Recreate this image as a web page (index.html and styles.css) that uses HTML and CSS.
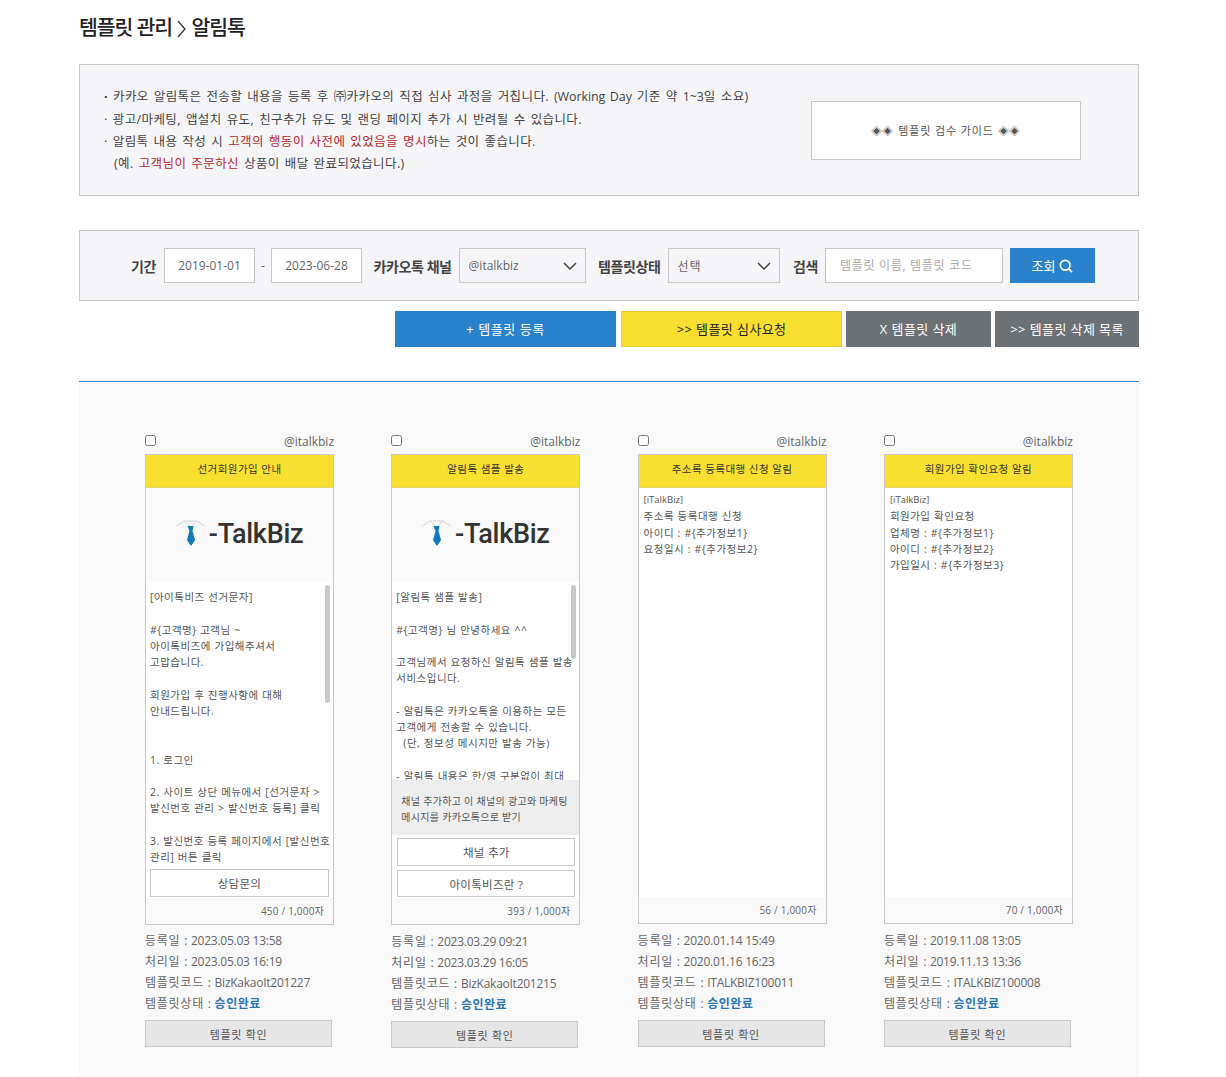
FILE: index.html
```html
<!DOCTYPE html>
<html lang="ko">
<head>
    <meta charset="UTF-8">
    <meta name="viewport" content="width=device-width, initial-scale=1.0">
    <title>템플릿 관리 - 알림톡</title>
    <link rel="stylesheet" href="styles.css">
</head>
<body>
    <main class="page">
        <h1 class="page-title">템플릿 관리 <svg class="crumb-sep" viewBox="0 0 9 18"><path d="M1 1l7 8-7 8"/></svg> 알림톡</h1>

        <section class="notice">
            <div class="notice-text">
                <p><b class="dot">·</b> 카카오 알림톡은 전송할 내용을 등록 후 ㈜카카오의 직접 심사 과정을 거칩니다. <span class="latin">(Working Day</span> 기준 약 <span class="latin">1~3</span>일 소요)</p>
                <p>· 광고/마케팅, 앱설치 유도, 친구추가 유도 및 랜딩 페이지 추가 시 반려될 수 있습니다.</p>
                <p>· 알림톡 내용 작성 시 <span class="red">고객의 행동이 사전에 있었음을 명시</span>하는 것이 좋습니다.</p>
                <p class="indent">(예. <span class="red">고객님이 주문하신</span> 상품이 배달 완료되었습니다.)</p>
            </div>
            <a class="guide-link">◈◈ 템플릿 검수 가이드 ◈◈</a>
        </section>

        <form class="search-bar">
            <label class="search-label label-first">기간</label>
            <input class="field date-field" type="text" value="2019-01-01">
            <span class="dash">-</span>
            <input class="field date-field" type="text" value="2023-06-28">
            <label class="search-label label-channel">카카오톡 채널</label>
            <div class="field select-field channel-select">
                <span>@italkbiz</span>
                <svg class="chevron" viewBox="0 0 14 8"><path d="M1 1l6 6 6-6"/></svg>
            </div>
            <label class="search-label">템플릿상태</label>
            <div class="field select-field status-select">
                <span class="status-value">선택</span>
                <svg class="chevron" viewBox="0 0 14 8"><path d="M1 1l6 6 6-6"/></svg>
            </div>
            <label class="search-label label-keyword">검색</label>
            <input class="field keyword-field" type="text" placeholder="템플릿 이름, 템플릿 코드">
            <button class="search-btn" type="button">조회
                <svg class="search-icon" viewBox="0 0 14 14"><circle cx="6.2" cy="6.2" r="4.8"/><path d="M9.8 9.8l3.2 3.2"/></svg>
            </button>
        </form>

        <div class="actions">
            <button class="action-btn btn-blue" type="button">+ 템플릿 등록</button>
            <button class="action-btn btn-yellow" type="button">&gt;&gt; 템플릿 심사요청</button>
            <button class="action-btn btn-gray btn-delete" type="button">X 템플릿 삭제</button>
            <button class="action-btn btn-gray btn-deleted" type="button">&gt;&gt; 템플릿 삭제 목록</button>
        </div>

        <section class="template-panel">
            <article class="template">
                <div class="template-top">
                    <input type="checkbox">
                    <span class="channel-name">@italkbiz</span>
                </div>
                <div class="phone">
                    <div class="phone-title">선거회원가입 안내</div>
                    <div class="logo-box">
                        <svg class="tie" viewBox="0 0 29 27"><path class="collar" d="M.5 6L8 1h13l7.500 5M8 1l6.500 6L21 1"/><path class="tie-fill" d="M11.500 6h6l-1 5 2.500 9-4 6-4-6 2.500-9z"/></svg>
                        <span class="logo-text">-TalkBiz</span>
                    </div>
                    <div class="message message-one">
                        <span class="scroll-thumb thumb-one"></span>
                        <pre class="message-text">[아이톡비즈 선거문자]

#{고객명} 고객님 ~
아이톡비즈에 가입해주셔서
고맙습니다.

회원가입 후 진행사항에 대해
안내드립니다.


1. 로그인

2. 사이트 상단 메뉴에서 [선거문자 &gt;
발신번호 관리 &gt; 발신번호 등록] 클릭

3. 발신번호 등록 페이지에서 [발신번호
관리] 버튼 클릭</pre>
                    </div>
                    <div class="phone-btns">
                        <div class="phone-btn">상담문의</div>
                    </div>
                    <div class="count">450 / 1,000자</div>
                </div>
                <div class="meta">
                    <p><span class="meta-label">등록일 :</span> 2023.05.03 13:58</p>
                    <p><span class="meta-label">처리일 :</span> 2023.05.03 16:19</p>
                    <p><span class="meta-label">템플릿코드 :</span> BizKakaoIt201227</p>
                    <p><span class="meta-label">템플릿상태 :</span> <b class="status">승인완료</b></p>
                </div>
                <button class="check-btn" type="button">템플릿 확인</button>
            </article>

            <article class="template">
                <div class="template-top">
                    <input type="checkbox">
                    <span class="channel-name">@italkbiz</span>
                </div>
                <div class="phone">
                    <div class="phone-title">알림톡 샘플 발송</div>
                    <div class="logo-box">
                        <svg class="tie" viewBox="0 0 29 27"><path class="collar" d="M.5 6L8 1h13l7.500 5M8 1l6.500 6L21 1"/><path class="tie-fill" d="M11.500 6h6l-1 5 2.500 9-4 6-4-6 2.500-9z"/></svg>
                        <span class="logo-text">-TalkBiz</span>
                    </div>
                    <div class="message message-two">
                        <span class="scroll-thumb thumb-two"></span>
                        <pre class="message-text">[알림톡 샘플 발송]

#{고객명} 님 안녕하세요 ^^

고객님께서 요청하신 알림톡 샘플 발송
서비스입니다.

- 알림톡은 카카오톡을 이용하는 모든
고객에게 전송할 수 있습니다.
  (단, 정보성 메시지만 발송 가능)

- 알림톡 내용은 한/영 구분없이 최대</pre>
                    </div>
                    <div class="channel-add">채널 추가하고 이 채널의 광고와 마케팅<br>메시지를 카카오톡으로 받기</div>
                    <div class="phone-btns">
                        <div class="phone-btn">채널 추가</div>
                        <div class="phone-btn">아이톡비즈란 ?</div>
                    </div>
                    <div class="count">393 / 1,000자</div>
                </div>
                <div class="meta meta-low">
                    <p><span class="meta-label">등록일 :</span> 2023.03.29 09:21</p>
                    <p><span class="meta-label">처리일 :</span> 2023.03.29 16:05</p>
                    <p><span class="meta-label">템플릿코드 :</span> BizKakaoIt201215</p>
                    <p><span class="meta-label">템플릿상태 :</span> <b class="status">승인완료</b></p>
                </div>
                <button class="check-btn" type="button">템플릿 확인</button>
            </article>

            <article class="template">
                <div class="template-top">
                    <input type="checkbox">
                    <span class="channel-name">@italkbiz</span>
                </div>
                <div class="phone">
                    <div class="phone-title">주소록 등록대행 신청 알림</div>
                    <div class="message message-plain">
                        <pre class="message-text"><span class="brand-line">[iTalkBiz]</span>
주소록 등록대행 신청
아이디 : #{추가정보1}
요청일시 : #{추가정보2}</pre>
                    </div>
                    <div class="count">56 / 1,000자</div>
                </div>
                <div class="meta meta-low">
                    <p><span class="meta-label">등록일 :</span> 2020.01.14 15:49</p>
                    <p><span class="meta-label">처리일 :</span> 2020.01.16 16:23</p>
                    <p><span class="meta-label">템플릿코드 :</span> ITALKBIZ100011</p>
                    <p><span class="meta-label">템플릿상태 :</span> <b class="status">승인완료</b></p>
                </div>
                <button class="check-btn" type="button">템플릿 확인</button>
            </article>

            <article class="template">
                <div class="template-top">
                    <input type="checkbox">
                    <span class="channel-name">@italkbiz</span>
                </div>
                <div class="phone">
                    <div class="phone-title">회원가입 확인요청 알림</div>
                    <div class="message message-plain">
                        <pre class="message-text"><span class="brand-line">[iTalkBiz]</span>
회원가입 확인요청
업체명 : #{추가정보1}
아이디 : #{추가정보2}
가입일시 : #{추가정보3}</pre>
                    </div>
                    <div class="count">70 / 1,000자</div>
                </div>
                <div class="meta meta-low">
                    <p><span class="meta-label">등록일 :</span> 2019.11.08 13:05</p>
                    <p><span class="meta-label">처리일 :</span> 2019.11.13 13:36</p>
                    <p><span class="meta-label">템플릿코드 :</span> ITALKBIZ100008</p>
                    <p><span class="meta-label">템플릿상태 :</span> <b class="status">승인완료</b></p>
                </div>
                <button class="check-btn" type="button">템플릿 확인</button>
            </article>
        </section>
    </main>
</body>
</html>
```

FILE: styles.css
```css
* {
    margin: 0;
    padding: 0;
    box-sizing: border-box;
}

body {
    font-family: "Open Sans", "Noto Sans CJK KR", sans-serif;
    background: #fff;
    color: #555;
    height: 1077px;
    overflow: hidden;
}

.page {
    width: 1060px;
    margin-left: 79px;
}

.page-title {
    font-size: 20.500px;
    font-weight: 500;
    line-height: 28px;
    height: 64px;
    padding-top: 13px;
    color: #222;
    letter-spacing: -1.1px;
    white-space: nowrap;
}

.crumb-sep {
    width: 9px;
    height: 18px;
    margin: 0 1px;
    vertical-align: -3px;
    fill: none;
    stroke: #333;
    stroke-width: 1.3;
}

/* notice box */
.notice {
    display: flex;
    align-items: center;
    height: 132px;
    padding-left: 24px;
    background: #f5f5f7;
    border: 1px solid #c8c8c8;
}

.notice-text {
    width: 707px;
    padding-top: 2px;
    font-size: 12.500px;
    line-height: 22.300px;
    letter-spacing: 0.4px;
    word-spacing: 1.400px;
    color: #444;
    white-space: nowrap;
}

.latin {
    letter-spacing: -0.1px;
}

.dot {
    color: #222;
}

.indent {
    padding-left: 10px;
}

.red {
    color: #b8282e;
}

.guide-link {
    display: block;
    width: 270px;
    height: 59px;
    line-height: 57px;
    text-align: center;
    font-size: 11px;
    letter-spacing: 0.9px;
    color: #555;
    background: #fff;
    border: 1px solid #c8c8c8;
}

/* search */
.search-bar {
    display: flex;
    align-items: center;
    height: 71px;
    margin-top: 34px;
    padding-left: 51px;
    background: #f5f5f7;
    border: 1px solid #c8c8c8;
    white-space: nowrap;
}

.search-label {
    font-size: 14px;
    font-weight: 700;
    color: #444;
    letter-spacing: -0.4px;
    margin-left: 12.500px;
    margin-right: 7px;
}

.label-first {
    margin-left: 0;
    margin-right: 8px;
}

.label-channel {
    margin-left: 11.500px;
}

.label-keyword {
    margin-left: 13.500px;
}

.field {
    height: 35px;
    font-family: inherit;
    font-size: 12px;
    color: #666;
    background: #fff;
    border: 1px solid #c8c8c8;
}

.date-field {
    width: 91px;
    text-align: center;
}

.dash {
    width: 16px;
    text-align: center;
    font-size: 12px;
}

.select-field {
    display: flex;
    align-items: center;
    justify-content: space-between;
    padding: 0 8px 0 9px;
    background: #f5f5f7;
}

.channel-select {
    width: 127px;
}

.status-select {
    width: 112px;
}

.status-value {
    letter-spacing: 1px;
}

.chevron {
    width: 14px;
    height: 8px;
    fill: none;
    stroke: #444;
    stroke-width: 1.5;
}

.keyword-field {
    width: 178px;
    padding-left: 14px;
    letter-spacing: 0.7px;
}

.keyword-field::placeholder {
    color: #aaa;
}

.search-btn {
    display: flex;
    align-items: center;
    justify-content: center;
    gap: 4px;
    width: 85px;
    height: 35px;
    margin-left: 7px;
    font-family: inherit;
    font-size: 13px;
    color: #fff;
    background: #2a82cc;
    border: 0;
}

.search-icon {
    width: 14px;
    height: 14px;
    fill: none;
    stroke: #fff;
    stroke-width: 1.8;
}

/* action buttons */
.actions {
    display: flex;
    justify-content: flex-end;
    gap: 4px;
    margin-top: 10px;
}

.action-btn {
    height: 36px;
    padding-bottom: 1px;
    font-family: inherit;
    font-size: 13px;
    letter-spacing: 0.4px;
    border: 0;
    color: #fff;
}

.btn-blue {
    width: 221px;
    margin-right: 1px;
    background: #2a82cc;
    letter-spacing: 0.55px;
}

.btn-yellow {
    width: 221px;
    color: #222;
    background: #f9df2f;
    border: 1px solid #e5c92f;
}

.btn-gray {
    background: #6c7176;
}

.btn-delete {
    width: 145px;
}

.btn-deleted {
    width: 144px;
}

/* template list */
.template-panel {
    display: grid;
    grid-template-columns: repeat(4, 189px);
    column-gap: 57.3px;
    height: 696px;
    margin-top: 34px;
    padding: 51px 0 0 66px;
    background: #f9f9f9;
    border-top: 1px solid #3a8cc8;
}

.template-top {
    display: flex;
    justify-content: space-between;
    align-items: center;
    height: 21px;
    padding-bottom: 4px;
}

.template-top input {
    width: 11px;
    height: 11px;
    margin: 0 0 3px;
}

.channel-name {
    font-size: 12px;
    color: #666;
}

.phone {
    border: 1px solid #c8c8c8;
    background: #f9f9f9;
}

.phone-title {
    height: 33px;
    line-height: 28px;
    text-align: center;
    font-size: 10.500px;
    letter-spacing: 0.45px;
    color: #333;
    background: #f9df2f;
    border-bottom: 1px solid #e5d56a;
}

.logo-box {
    display: flex;
    align-items: center;
    justify-content: center;
    gap: 4px;
    height: 93px;
    padding-bottom: 2px;
    background: #f9f9f9;
}

.tie {
    width: 29px;
    height: 27px;
}

.collar {
    fill: none;
    stroke: #d4d4d4;
    stroke-width: 1;
}

.tie-fill {
    fill: #0f7abf;
}

.logo-text {
    font-family: Roboto, sans-serif;
    font-size: 27px;
    font-weight: 500;
    letter-spacing: -0.3px;
    color: #333;
}

.message {
    position: relative;
    overflow: hidden;
    padding: 8px 0 0 4px;
    background: #fff;
}

.message-one {
    height: 287px;
}

.message-two {
    height: 199px;
}

.message-plain {
    height: 409px;
    padding: 3px 0 0 5px;
}

.message-text {
    font-family: inherit;
    font-size: 10.500px;
    line-height: 16.250px;
    letter-spacing: 0.5px;
    word-spacing: 0.3px;
    color: #555;
    white-space: pre;
}

.brand-line {
    font-size: 9.500px;
    letter-spacing: 0;
}

.scroll-thumb {
    position: absolute;
    top: 4px;
    right: 3px;
    width: 5px;
    background: #c8c8c8;
    border-radius: 3px;
}

.thumb-one {
    height: 118px;
}

.thumb-two {
    height: 74px;
}

.channel-add {
    height: 55px;
    padding: 14px 0 0 9px;
    font-size: 10px;
    line-height: 15.500px;
    letter-spacing: 0.3px;
    color: #555;
    background: #eeeeee;
}

.phone-btns {
    display: flex;
    flex-direction: column;
    gap: 4px;
    padding: 3px 4px 1px 5px;
    background: #fff;
}

.message-one + .phone-btns {
    padding: 1px 4px;
}

.phone-btn {
    height: 28px;
    line-height: 27px;
    text-align: center;
    font-size: 11.500px;
    letter-spacing: 0.3px;
    color: #555;
    background: #fff;
    border: 1px solid #c8c8c8;
}

.phone-btn + .phone-btn {
    height: 27px;
}

.count {
    height: 26px;
    padding-right: 9px;
    line-height: 26px;
    text-align: right;
    font-size: 10px;
    letter-spacing: 0.2px;
    color: #666;
}

.meta {
    padding-top: 5px;
    font-size: 12px;
    line-height: 21px;
    letter-spacing: -0.25px;
    color: #666;
    white-space: nowrap;
}

.meta-low {
    padding-top: 6px;
}

.meta-label {
    letter-spacing: 0.75px;
}

.status {
    letter-spacing: 0.5px;
    color: #2a75b5;
}

.check-btn {
    display: block;
    width: 187px;
    height: 27px;
    margin-top: 6px;
    font-family: inherit;
    font-size: 11px;
    letter-spacing: 0.7px;
    color: #555;
    background: #e6e6e6;
    border: 1px solid #c8c8c8;
}
```
